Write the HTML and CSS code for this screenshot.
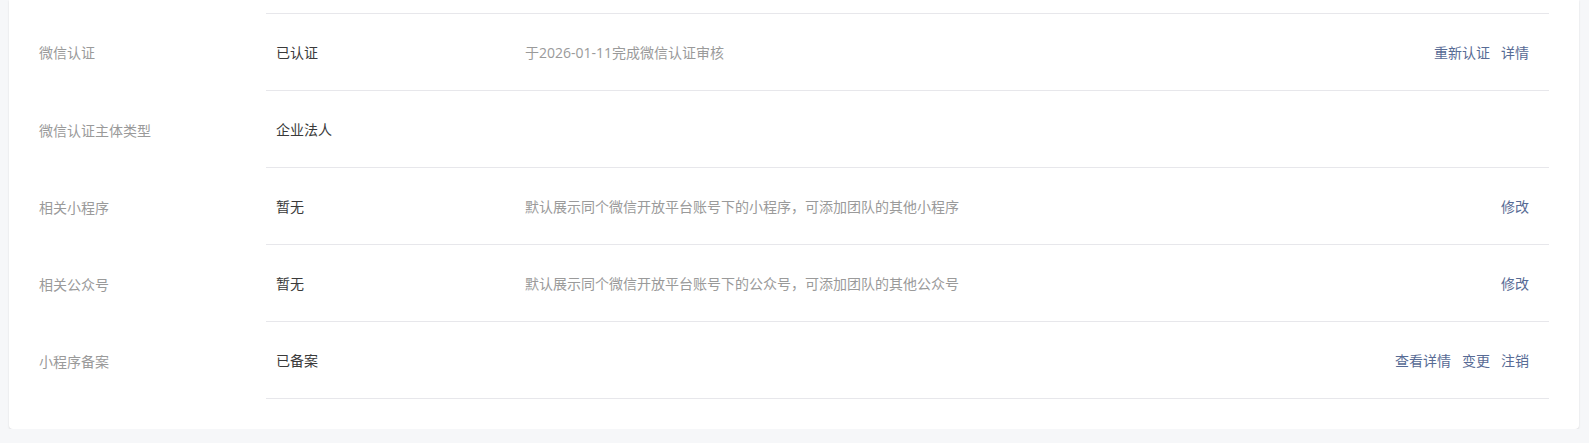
FILE: index.html
```html
<!DOCTYPE html>
<html lang="zh-CN">
  <head>
    <meta charset="UTF-8" />
    <meta name="viewport" content="width=device-width, initial-scale=1.0" />
    <title>基本设置</title>

    <link rel="stylesheet" href="styles.css">
  </head>

  <body>
    <main class="card">
      <ul class="lista-info">
        <li class="linha">
          <span class="rotulo">微信认证</span>
          <div class="conteudo">
            <span class="valor">已认证</span>
            <span class="descricao">于2026-01-11完成微信认证审核</span>
            <span class="acoes">
              <a href="#">重新认证</a>
              <a href="#">详情</a>
            </span>
          </div>
        </li>
        <li class="linha">
          <span class="rotulo">微信认证主体类型</span>
          <div class="conteudo">
            <span class="valor">企业法人</span>
          </div>
        </li>
        <li class="linha">
          <span class="rotulo">相关小程序</span>
          <div class="conteudo">
            <span class="valor">暂无</span>
            <span class="descricao">默认展示同个微信开放平台账号下的小程序，可添加团队的其他小程序</span>
            <span class="acoes">
              <a href="#">修改</a>
            </span>
          </div>
        </li>
        <li class="linha">
          <span class="rotulo">相关公众号</span>
          <div class="conteudo">
            <span class="valor">暂无</span>
            <span class="descricao">默认展示同个微信开放平台账号下的公众号，可添加团队的其他公众号</span>
            <span class="acoes">
              <a href="#">修改</a>
            </span>
          </div>
        </li>
        <li class="linha">
          <span class="rotulo">小程序备案</span>
          <div class="conteudo">
            <span class="valor">已备案</span>
            <span class="acoes">
              <a href="#">查看详情</a>
              <a href="#">变更</a>
              <a href="#">注销</a>
            </span>
          </div>
        </li>
      </ul>
    </main>
  </body>
</html>
```

FILE: styles.css
```css
body {
  font-family: "Open Sans", "Noto Sans CJK SC", sans-serif;
  font-size: 14px;
  margin: 0;
  padding: 0;
  background-color: #f6f7f9;
  color: #3a3a3a;
}

.card {
  margin: 0 10px 0 9px;
  background: #fff;
  border-radius: 0 0 4px 4px;
  box-shadow: 0 1px 2px rgba(0, 0, 0, 0.12);
  padding: 13px 0 30px;
}

.lista-info {
  list-style: none;
  margin: 0;
  padding: 0;
}

.linha {
  display: flex;
  align-items: stretch;
}

.rotulo {
  width: 227px;
  padding-left: 30px;
  color: #9a9a9a;
  display: flex;
  align-items: center;
  flex-shrink: 0;
}

.conteudo {
  flex: 1;
  margin-right: 30px;
  height: 76px;
  padding: 0 20px 0 10px;
  display: flex;
  align-items: center;
  border-bottom: 1px solid #e7e7eb;
}

.linha:first-child .conteudo {
  border-top: 1px solid #e7e7eb;
}

.valor {
  width: 249px;
  flex-shrink: 0;
}

.descricao {
  color: #9a9a9a;
}

.acoes {
  margin-left: auto;
  display: flex;
  gap: 11px;
}

.acoes a {
  color: #576b95;
  text-decoration: none;
}
```
